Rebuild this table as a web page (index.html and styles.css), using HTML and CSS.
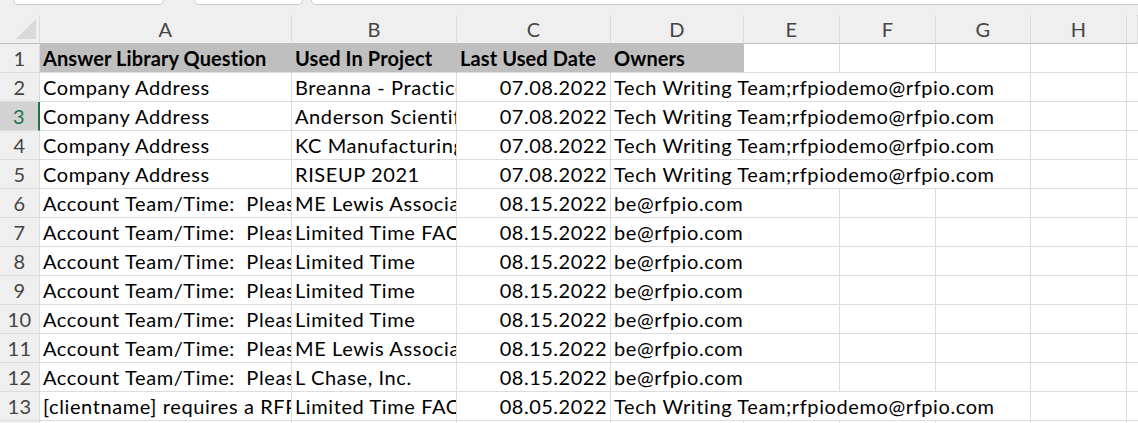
FILE: index.html
```html
<!DOCTYPE html>
<html>
<head>
<meta charset="utf-8">
<link rel="stylesheet" href="styles.css">
</head>
<body>
<div class="sheet">
  <div class="tabs">
    <div class="tab tab1"></div>
    <div class="tab tab2"></div>
    <div class="tab tab3"></div>
  </div>
  <div class="grid">
    <div class="corner"><svg width="39" height="28" viewBox="0 0 39 28"><polygon points="16,24 36,24 36,4" fill="#d9d9d9"/></svg></div>
    <div class="ch">A</div><div class="ch">B</div><div class="ch">C</div><div class="ch">D</div><div class="ch">E</div><div class="ch">F</div><div class="ch">G</div><div class="ch">H</div><div class="ch last"></div>

    <div class="rh">1</div>
    <div class="c hd">Answer Library Question</div><div class="c hd">Used In Project</div><div class="c hd">Last Used Date</div><div class="c hd">Owners</div>
    <div class="c"></div><div class="c"></div><div class="c"></div><div class="c"></div><div class="c last"></div>

    <div class="rh">2</div>
    <div class="c">Company Address</div><div class="c">Breanna - Practice</div><div class="c num">07.08.2022</div><div class="c span4">Tech Writing Team;rfpiodemo@rfpio.com</div>
    <div class="c"></div><div class="c last"></div>

    <div class="rh sel">3</div>
    <div class="c">Company Address</div><div class="c">Anderson Scientific</div><div class="c num">07.08.2022</div><div class="c span4">Tech Writing Team;rfpiodemo@rfpio.com</div>
    <div class="c"></div><div class="c last"></div>

    <div class="rh">4</div>
    <div class="c">Company Address</div><div class="c">KC Manufacturing</div><div class="c num">07.08.2022</div><div class="c span4">Tech Writing Team;rfpiodemo@rfpio.com</div>
    <div class="c"></div><div class="c last"></div>

    <div class="rh">5</div>
    <div class="c">Company Address</div><div class="c">RISEUP 2021</div><div class="c num">07.08.2022</div><div class="c span4">Tech Writing Team;rfpiodemo@rfpio.com</div>
    <div class="c"></div><div class="c last"></div>

    <div class="rh">6</div>
    <div class="c">Account Team/Time:&nbsp; Please</div><div class="c">ME Lewis Associates</div><div class="c num">08.15.2022</div><div class="c span2">be@rfpio.com</div>
    <div class="c"></div><div class="c"></div><div class="c"></div><div class="c last"></div>

    <div class="rh">7</div>
    <div class="c">Account Team/Time:&nbsp; Please</div><div class="c">Limited Time FAQ</div><div class="c num">08.15.2022</div><div class="c span2">be@rfpio.com</div>
    <div class="c"></div><div class="c"></div><div class="c"></div><div class="c last"></div>

    <div class="rh">8</div>
    <div class="c">Account Team/Time:&nbsp; Please</div><div class="c">Limited Time</div><div class="c num">08.15.2022</div><div class="c span2">be@rfpio.com</div>
    <div class="c"></div><div class="c"></div><div class="c"></div><div class="c last"></div>

    <div class="rh">9</div>
    <div class="c">Account Team/Time:&nbsp; Please</div><div class="c">Limited Time</div><div class="c num">08.15.2022</div><div class="c span2">be@rfpio.com</div>
    <div class="c"></div><div class="c"></div><div class="c"></div><div class="c last"></div>

    <div class="rh">10</div>
    <div class="c">Account Team/Time:&nbsp; Please</div><div class="c">Limited Time</div><div class="c num">08.15.2022</div><div class="c span2">be@rfpio.com</div>
    <div class="c"></div><div class="c"></div><div class="c"></div><div class="c last"></div>

    <div class="rh">11</div>
    <div class="c">Account Team/Time:&nbsp; Please</div><div class="c">ME Lewis Associates</div><div class="c num">08.15.2022</div><div class="c span2">be@rfpio.com</div>
    <div class="c"></div><div class="c"></div><div class="c"></div><div class="c last"></div>

    <div class="rh">12</div>
    <div class="c">Account Team/Time:&nbsp; Please</div><div class="c">L Chase, Inc.</div><div class="c num">08.15.2022</div><div class="c span2">be@rfpio.com</div>
    <div class="c"></div><div class="c"></div><div class="c"></div><div class="c last"></div>

    <div class="rh">13</div>
    <div class="c">[clientname] requires a RFP response</div><div class="c">Limited Time FAQ</div><div class="c num">08.05.2022</div><div class="c span4">Tech Writing Team;rfpiodemo@rfpio.com</div>
    <div class="c"></div><div class="c last"></div>

    <div class="rh">14</div>
    <div class="c"></div><div class="c"></div><div class="c"></div><div class="c"></div><div class="c"></div><div class="c"></div><div class="c"></div><div class="c"></div><div class="c last"></div>
  </div>
</div>
</body>
</html>
```

FILE: styles.css
```css
* { box-sizing: border-box; }
html, body { margin: 0; padding: 0; background: #ffffff; }
body { font-family: Lato, "Open Sans", sans-serif; color: #000; overflow: hidden; }

.sheet { width: 1138px; height: 423px; overflow: hidden; }

.tabs {
  height: 15px;
  background: #efefef;
  display: flex;
  align-items: flex-start;
  padding-left: 13px;
}
.tab {
  height: 5px;
  background: #ffffff;
  border: 1px solid #c9c9c9;
  border-top: none;
  border-radius: 0 0 7px 7px;
}
.tab1 { width: 151px; }
.tab2 { width: 109px; margin-left: 30px; }
.tab3 { flex: 1; margin-left: 8px; margin-right: -10px; }

.grid {
  display: grid;
  grid-template-columns: 40px 252px 165px 154px 133px 96px 96px 95px 96px 1fr;
  grid-auto-rows: 29px;
}

.corner {
  background: #efefef;
  border-right: 1px solid #dcdcdc;
  border-bottom: 1px solid #bdbdbd;
}
.corner svg { display: block; }

.ch {
  background: #efefef;
  border-bottom: 1px solid #bdbdbd;
  border-right: 1px solid #dcdcdc;
  text-align: center;
  font-size: 20px;
  letter-spacing: 0.3px;
  line-height: 28px;
  color: #444;
}

.rh {
  background: #efefef;
  border-right: 1px solid #dcdcdc;
  border-bottom: 1px solid #dcdcdc;
  text-align: center;
  font-size: 20px;
  letter-spacing: 0.4px;
  line-height: 28px;
  color: #444;
}
.rh.sel {
  background: #d3d3d3;
  color: #217346;
  border-right: 2px solid #217346;
}

.c {
  border-right: 1px solid #dcdcdc;
  border-bottom: 1px solid #dcdcdc;
  font-size: 20px;
  letter-spacing: 0.6px;
  line-height: 28px;
  padding: 0 3px;
  white-space: nowrap;
  overflow: hidden;
}
.c.last { border-right: none; }
.c.hd {
  background: #bfbfbf;
  font-weight: 700;
  letter-spacing: 0.1px;
  border-right-color: #bfbfbf;
}
.c.num { text-align: right; padding-right: 3px; letter-spacing: 0.5px; }
.c.span4 { grid-column: span 4; }
.c.span2 { grid-column: span 2; }
```
